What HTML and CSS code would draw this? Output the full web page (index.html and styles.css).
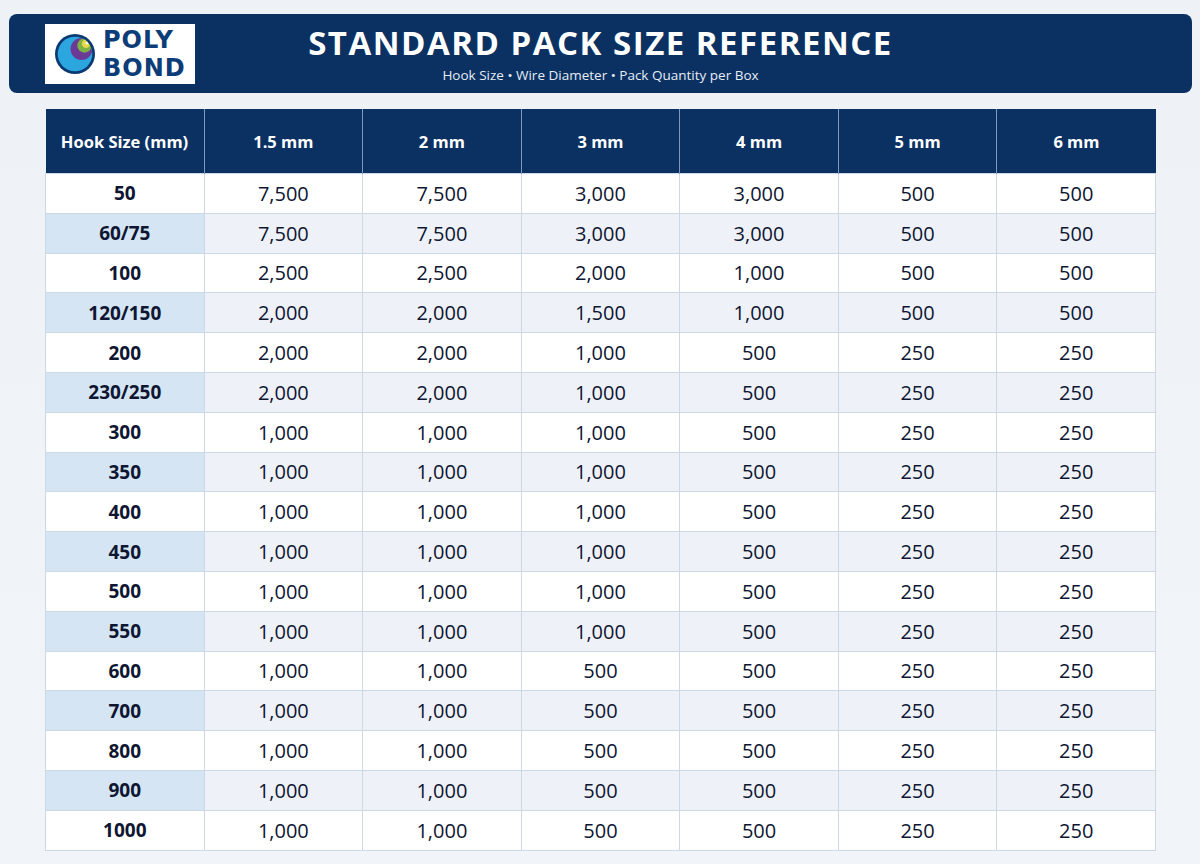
FILE: index.html
```html
<!DOCTYPE html>
<html>
<head>
<meta charset="utf-8">
<link rel="stylesheet" href="styles.css">
</head>
<body>
<header class="banner">
  <div class="logo">
    <svg class="logo-mark" width="40" height="40" viewBox="0 0 40 40">
      <defs>
        <clipPath id="inner"><circle cx="20" cy="20" r="17.3"/></clipPath>
      </defs>
      <circle cx="20" cy="20" r="20" fill="#0b3a73"/>
      <circle cx="20" cy="20" r="17.3" fill="#2ba6df"/>
      <g clip-path="url(#inner)">
        <circle cx="26.5" cy="15" r="11" fill="#6b3a96"/>
        <circle cx="29.5" cy="11.5" r="7.2" fill="#7cb342"/>
        <circle cx="31" cy="9.8" r="4.2" fill="#e6d84a"/>
        <circle cx="31.8" cy="9" r="1.5" fill="#fffbe0"/>
      </g>
    </svg>
    <div class="logo-text"><span class="logo-line">POLY</span><span class="logo-line">BOND</span></div>
  </div>
  <div class="titles">
    <h1>STANDARD PACK SIZE REFERENCE</h1>
    <p>Hook Size • Wire Diameter • Pack Quantity per Box</p>
  </div>
  <div class="spacer"></div>
</header>

<table class="packs">
  <thead>
    <tr><th>Hook Size (mm)</th><th>1.5 mm</th><th>2 mm</th><th>3 mm</th><th>4 mm</th><th>5 mm</th><th>6 mm</th></tr>
  </thead>
  <tbody>
    <tr><td>50</td><td>7,500</td><td>7,500</td><td>3,000</td><td>3,000</td><td>500</td><td>500</td></tr>
    <tr><td>60/75</td><td>7,500</td><td>7,500</td><td>3,000</td><td>3,000</td><td>500</td><td>500</td></tr>
    <tr><td>100</td><td>2,500</td><td>2,500</td><td>2,000</td><td>1,000</td><td>500</td><td>500</td></tr>
    <tr><td>120/150</td><td>2,000</td><td>2,000</td><td>1,500</td><td>1,000</td><td>500</td><td>500</td></tr>
    <tr><td>200</td><td>2,000</td><td>2,000</td><td>1,000</td><td>500</td><td>250</td><td>250</td></tr>
    <tr><td>230/250</td><td>2,000</td><td>2,000</td><td>1,000</td><td>500</td><td>250</td><td>250</td></tr>
    <tr><td>300</td><td>1,000</td><td>1,000</td><td>1,000</td><td>500</td><td>250</td><td>250</td></tr>
    <tr><td>350</td><td>1,000</td><td>1,000</td><td>1,000</td><td>500</td><td>250</td><td>250</td></tr>
    <tr><td>400</td><td>1,000</td><td>1,000</td><td>1,000</td><td>500</td><td>250</td><td>250</td></tr>
    <tr><td>450</td><td>1,000</td><td>1,000</td><td>1,000</td><td>500</td><td>250</td><td>250</td></tr>
    <tr><td>500</td><td>1,000</td><td>1,000</td><td>1,000</td><td>500</td><td>250</td><td>250</td></tr>
    <tr><td>550</td><td>1,000</td><td>1,000</td><td>1,000</td><td>500</td><td>250</td><td>250</td></tr>
    <tr><td>600</td><td>1,000</td><td>1,000</td><td>500</td><td>500</td><td>250</td><td>250</td></tr>
    <tr><td>700</td><td>1,000</td><td>1,000</td><td>500</td><td>500</td><td>250</td><td>250</td></tr>
    <tr><td>800</td><td>1,000</td><td>1,000</td><td>500</td><td>500</td><td>250</td><td>250</td></tr>
    <tr><td>900</td><td>1,000</td><td>1,000</td><td>500</td><td>500</td><td>250</td><td>250</td></tr>
    <tr><td>1000</td><td>1,000</td><td>1,000</td><td>500</td><td>500</td><td>250</td><td>250</td></tr>
  </tbody>
</table>
</body>
</html>
```

FILE: styles.css
```css
html, body {
  margin: 0;
  padding: 0;
}
body {
  background: linear-gradient(180deg, #eef2f7 0%, #f1f4f9 100%);
  font-family: "Open Sans", "Liberation Sans", sans-serif;
  color: #0e1632;
  padding: 14px 8px 0 9px;
  height: 864px;
  box-sizing: border-box;
}

.banner {
  display: grid;
  grid-template-columns: 1fr auto 1fr;
  align-items: center;
  height: 79px;
  background: #0b3163;
  border-radius: 8px;
  padding: 0 36px;
  box-sizing: border-box;
}

.logo {
  justify-self: start;
  display: flex;
  align-items: center;
  gap: 8px;
  background: #ffffff;
  width: 150px;
  height: 60px;
  box-sizing: border-box;
  padding-left: 10px;
}
.logo-mark {
  flex: none;
}
.logo-text {
  display: flex;
  flex-direction: column;
  font-family: "DejaVu Sans", "Open Sans", sans-serif;
  font-weight: 700;
  font-size: 24px;
  letter-spacing: 1px;
  color: #0d3d78;
  margin-top: 1px;
}
.logo-line {
  display: block;
  line-height: 28px;
}

.titles {
  text-align: center;
  color: #ffffff;
}
.titles h1 {
  margin: 0;
  font-size: 33px;
  font-weight: 700;
  letter-spacing: 1.5px;
  line-height: 40px;
}
.titles p {
  margin: 3px 0 0;
  font-size: 13.5px;
  line-height: 18px;
  color: #e6ecf5;
}

.packs {
  margin: 16px 0 0 36px;
  width: 1111px;
  border-collapse: collapse;
  table-layout: fixed;
}
.packs th {
  background: #0b3163;
  color: #ffffff;
  font-size: 16.5px;
  font-weight: 700;
  height: 64px;
  padding: 0;
  border-left: 1px solid #7f97b8;
}
.packs th:first-child {
  border-left: none;
}
.packs td {
  height: 38.8px;
  padding: 0;
  text-align: center;
  font-size: 20px;
  border: 1px solid #cdd8e5;
  background: #ffffff;
}
.packs td:first-child {
  font-weight: 700;
  font-size: 19px;
}
.packs tbody tr:nth-child(even) td {
  background: #eef2f8;
}
.packs tbody tr:nth-child(even) td:first-child {
  background: #d5e5f4;
}
```
